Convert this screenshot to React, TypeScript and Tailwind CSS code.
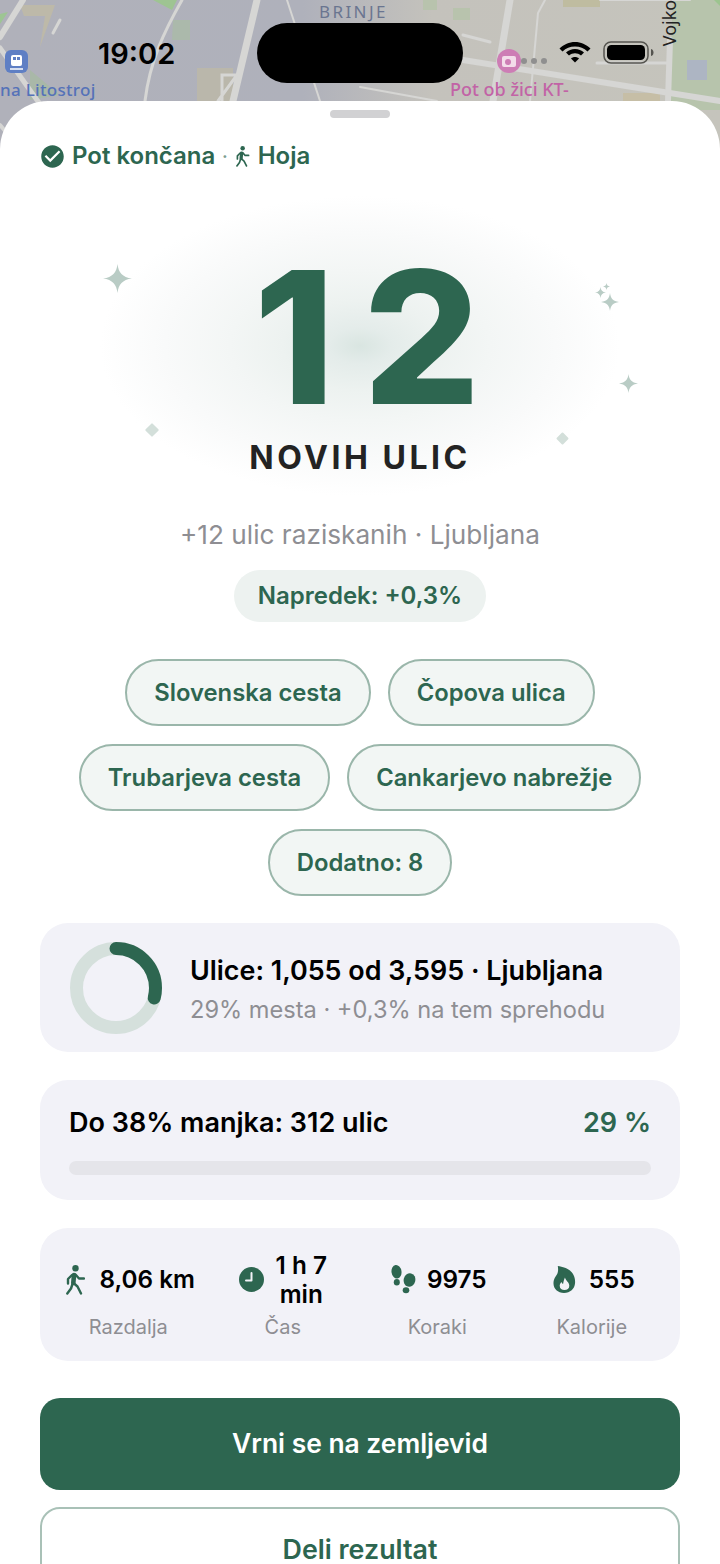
import { MdCheckCircle } from "react-icons/md";

const G = "#2d6650";

function MapBackdrop() {
  return (
    <svg className="absolute left-0 top-0" width="720" height="170" viewBox="0 0 720 170">
      <defs>
        <linearGradient id="mapbg" x1="0" x2="1" y1="0" y2="0">
          <stop offset="0" stopColor="#b0b1ba" />
          <stop offset="0.42" stopColor="#afb1bb" />
          <stop offset="0.6" stopColor="#c4c2bc" />
          <stop offset="1" stopColor="#c5c4bc" />
        </linearGradient>
        <filter id="soft">
          <feGaussianBlur stdDeviation="0.7" />
        </filter>
      </defs>
      <rect width="720" height="170" fill="url(#mapbg)" />
      <g filter="url(#soft)">
        <path d="M20 5 H55 L40 47 L45 16 H24 Z" fill="#bdb9a9" />
        <path d="M153 0 H177 L172 10 Z" fill="#9ec492" />
        <path d="M173 20 H190 V40 H172 Z" fill="#abb9ab" />
        <path d="M197 68 H233 V101 H197 Z" fill="#bab7ab" />
        <path d="M0 14 L8 12 L0 24 Z" fill="#9dc593" />
        <path d="M30 70 L60 95 L30 100 Z" fill="#a9b8a8" />
        <path d="M673 0 H720 V110 H668 Z" fill="#b7c4ac" />
        <path d="M714 0 H720 V6 Z" fill="#9cc48f" />
        <path d="M687 60 H707 V80 H687 Z" fill="#adb5c3" />
        <path d="M563 0 H600 V7 H563 Z" fill="#bfbca0" />
        <path d="M453 8 H470 V20 H453 Z" fill="#b8c3ad" />
        <path d="M423 0 H437 V10 H423 Z" fill="#b8c3ad" />
        <path d="M623 93 H660 V101 H623 Z" fill="#c6bea6" />
        <g fill="none" stroke="#d6d6d4" strokeLinecap="round">
          <path d="M23 0 L0 37" strokeWidth="6" />
          <path d="M0 48 L37 100 L52 120" strokeWidth="5" />
          <path d="M0 125 L30 160" strokeWidth="4" />
          <path d="M182 0 C165 30 150 60 145 101" strokeWidth="3" />
          <path d="M257 0 L233 101" strokeWidth="7" />
          <path d="M287 0 L320 101" strokeWidth="2" />
          <path d="M60 20 L53 33" strokeWidth="3" />
          <path d="M222 101 V75 H237 L218 101" strokeWidth="3" />
          <path d="M510 0 L493 101" strokeWidth="7" />
          <path d="M545 0 L538 13 L530 101" strokeWidth="2" />
          <path d="M463 60 L720 101" strokeWidth="6" />
          <path d="M670 40 L668 101" strokeWidth="6" />
          <path d="M597 63 H667" strokeWidth="3" />
          <path d="M463 35 L490 42" strokeWidth="3" />
          <path d="M360 87 L437 101" strokeWidth="2" />
          <path d="M600 0 H690" strokeWidth="2" />
        </g>
      </g>
      <rect x="5" y="50" width="23" height="23" rx="6" fill="#5f7fc4" />
      <rect x="11" y="55" width="11" height="11" rx="2" fill="#ffffff" />
      <rect x="13" y="57" width="3" height="3" fill="#5f7fc4" />
      <rect x="17" y="57" width="3" height="3" fill="#5f7fc4" />
      <path d="M10 69 H23" stroke="#fff" strokeWidth="1.500" />
      <circle cx="509" cy="61" r="12" fill="#cd7db5" />
      <rect x="502" y="56" width="14" height="11" rx="2" fill="#f3dcea" />
      <circle cx="508" cy="62" r="3" fill="#cd7db5" />
      <circle cx="524" cy="61" r="3" fill="#8f8f8f" />
      <circle cx="534" cy="61" r="3" fill="#8f8f8f" />
      <circle cx="544" cy="61" r="3" fill="#8f8f8f" />
    </svg>
  );
}

function StatusBar() {
  return (
    <>
      <span className="absolute left-[0px] top-[79px] text-[17px] leading-[22px] font-medium tracking-[0.3px] text-[#5572b8] font-['Noto_Sans',sans-serif]">na Litostroj</span>
      <span className="absolute left-[319px] top-[1px] text-[17px] leading-[22px] tracking-[2.400px] text-[#6a7590] font-['Noto_Sans',sans-serif]">BRINJE</span>
      <span className="absolute left-[450px] top-[78px] text-[18px] leading-[22px] font-medium text-[#c263a6] font-['Noto_Sans',sans-serif]">Pot ob žici KT-</span>
      <span className="absolute left-[646px] top-[12px] -rotate-90 text-[18px] leading-[22px] text-[#222] font-['Noto_Sans',sans-serif]">Vojko</span>
      <span className="absolute left-[98px] top-[36px] text-[29px] leading-[35px] font-semibold text-black">19:02</span>
      <div className="absolute left-[257px] top-[23px] h-[60px] w-[206px] rounded-[30px] bg-black" />
      <svg className="absolute left-[559px] top-[41px]" width="32" height="23" viewBox="0 0 32 23">
        <path d="M16 5 C10 5 5 7.500 0.500 11.500 L3.500 14.500 C7 11 11 9.500 16 9.500 C21 9.500 25 11 28.500 14.500 L31.500 11.500 C27 7.500 22 5 16 5 Z" transform="translate(0 -4)" fill="#000" />
        <path d="M16 11 C12.500 11 9.500 12.300 7 14.500 L10 17.500 C11.800 16 13.800 15.300 16 15.300 C18.200 15.300 20.200 16 22 17.500 L25 14.500 C22.500 12.300 19.500 11 16 11 Z" transform="translate(0 -3)" fill="#000" />
        <path d="M16 17 C14.500 17 13 17.500 12 18.500 L16 22.500 L20 18.500 C19 17.500 17.500 17 16 17 Z" transform="translate(0 -1)" fill="#000" />
      </svg>
      <svg className="absolute left-[603px] top-[40px]" width="52" height="24" viewBox="0 0 52 24">
        <rect x="1" y="2" width="44" height="21" rx="7" fill="none" stroke="#55544f" strokeWidth="1.500" />
        <rect x="4" y="5" width="38" height="15" rx="4.500" fill="#000" />
        <path d="M48 9 C50 9.500 50.500 11 50.500 12.500 C50.500 14 50 15.500 48 16 Z" fill="#55544f" />
      </svg>
    </>
  );
}

function Star({ size, className, color = "#b9ccc5" }: { size: number; className: string; color?: string }) {
  return (
    <svg className={className} width={size} height={size} viewBox="0 0 24 24">
      <path d="M12 0 C12.800 7 16 11 24 12 C16 13 12.800 17 12 24 C11.200 17 8 13 0 12 C8 11 11.200 7 12 0 Z" fill={color} />
    </svg>
  );
}

function Walk({ h }: { h: number }) {
  return (
    <svg width={(h * 19) / 30} height={h} viewBox="0 0 19 30" fill="none" stroke={G} strokeWidth="2.400" strokeLinecap="round" strokeLinejoin="round">
      <circle cx="9.500" cy="3.300" r="3.200" fill={G} stroke="none" />
      <path d="M8 10 L7.300 18" strokeWidth="4.600" />
      <path d="M9.500 9.500 L13 13.500 L18 13.500" />
      <path d="M6 10 L2 14 L2 18.500" />
      <path d="M7.500 18 L11.500 21.500 L15 28.500" />
      <path d="M6.500 19 L5 23.500 L1.300 28.500" />
    </svg>
  );
}

function Chip({ children }: { children: string }) {
  return (
    <span className="flex h-[67px] items-center rounded-[34px] border-2 border-[#9ab6aa] bg-[#f2f6f4] px-[27px] text-[23.800px] font-semibold text-[#2d6650]">
      {children}
    </span>
  );
}

function Footsteps() {
  return (
    <svg width="25" height="29" viewBox="0 0 25 29" fill={G}>
      <ellipse cx="5.500" cy="6.800" rx="5" ry="6.800" transform="rotate(-8 5.500 6.800)" />
      <ellipse cx="5.800" cy="17.200" rx="3" ry="3.300" />
      <ellipse cx="18.500" cy="15" rx="5.800" ry="6.800" transform="rotate(14 18.500 15)" />
      <ellipse cx="15" cy="25.300" rx="3.300" ry="3" />
    </svg>
  );
}

function Flame() {
  return (
    <svg width="23" height="27" viewBox="0 0 24 28">
      <path d="M5 0 C13 1 24 5 23 18 C22.500 24 18 28 11.500 28 C5 28 0.500 24 0.500 18 C0.500 13 3 11 4.500 8 C5.500 5.500 5.500 3 5 0 Z" fill={G} />
      <path d="M12.500 12 C13 15 17 17 17 20.500 C17 23.500 14.800 25 12 25 C9.200 25 7 23.500 7 20.500 C7 19 7.800 17.500 9 16.500 C9.300 18 10 18.500 10.600 18.500 C11 16 11.500 14 12.500 12 Z" fill="#f2f2f7" />
    </svg>
  );
}

function Clock() {
  return (
    <svg width="25" height="25" viewBox="0 0 25 25">
      <circle cx="12.500" cy="12.500" r="12.500" fill={G} />
      <path d="M12.500 6 V13.500 H7" fill="none" stroke="#f2f2f7" strokeWidth="2" strokeLinecap="round" strokeLinejoin="round" />
    </svg>
  );
}

function Stat({ icon, value, label, row }: { icon: React.ReactNode; value: React.ReactNode; label: string; row: string }) {
  return (
    <div className="flex flex-col items-center">
      <div className={`flex h-[58px] items-center ${row}`}>
        {icon}
        <span className="text-center text-[24.300px] leading-[29px] font-semibold text-black">{value}</span>
      </div>
      <span className="mt-[6px] text-[20px] leading-[24px] text-[#8e8e93]">{label}</span>
    </div>
  );
}

export default function App() {
  return (
    <div className="relative h-[1564px] w-[720px] overflow-hidden bg-white font-['Inter',sans-serif]">
      <MapBackdrop />
      <StatusBar />
      <div className="relative mt-[101px] flex flex-col rounded-t-[48px] bg-white px-[40px]">
        <div className="mx-auto mt-[9px] h-[8px] w-[60px] rounded-full bg-[#d1d1d3]" />
        <div className="mt-[23px] flex h-[30px] items-center text-[24px] font-semibold text-[#2d6650]">
          <MdCheckCircle size={27} className="ml-[-1px] mr-[6px]" color={G} />
          <span>Pot končana</span>
          <span className="ml-[5px] w-[9px] text-center text-[18px] text-[#7f9f92]">·</span>
          <span className="ml-[7px] mr-[8px] flex"><Walk h={21} /></span>
          <span>Hoja</span>
        </div>

        <div className="relative mx-[-40px] mt-[74px] flex flex-col items-center">
          <div className="absolute left-[100px] top-[-49px] h-[300px] w-[520px] bg-[radial-gradient(ellipse_closest-side,#d9e5e1_0%,#e4ecea_12%,#edf2f0_30%,#f3f6f5_50%,#f9fafa_75%,#ffffff_100%)]" />
          <Star size={29} className="absolute left-[103px] top-[19px]" />
          <Star size={18} className="absolute left-[601px] top-[48px]" />
          <Star size={11} className="absolute left-[595px] top-[42px]" />
          <Star size={7} className="absolute left-[603px] top-[38px]" />
          <Star size={19} className="absolute left-[619px] top-[129px]" />
          <div className="absolute left-[147px] top-[180px] h-[10px] w-[10px] rotate-45 rounded-[1px] bg-[#d3dfda]" />
          <div className="absolute left-[558px] top-[189px] h-[9px] w-[9px] rotate-45 rounded-[1px] bg-[#d3dfda]" />
          <div className="relative pl-[42px] text-[184px] leading-[184px] font-extrabold tracking-[28px] text-[#2d6650]">12</div>
          <div className="relative mt-[9px] text-[32px] leading-[40px] font-bold tracking-[3.500px] text-[#232323]">NOVIH ULIC</div>
        </div>

        <div className="mt-[40px] text-center text-[26.200px] leading-[34px] text-[#8e8e93]">+12 ulic raziskanih · Ljubljana</div>
        <div className="mt-[18px] flex justify-center">
          <span className="flex h-[52px] items-center rounded-[26px] bg-[#edf2f0] px-[24px] text-[24px] font-semibold text-[#2d6650]">Napredek: +0,3%</span>
        </div>

        <div className="mt-[37px] flex flex-wrap justify-center gap-x-[17px] gap-y-[18px]">
          <Chip>Slovenska cesta</Chip>
          <Chip>Čopova ulica</Chip>
          <Chip>Trubarjeva cesta</Chip>
          <Chip>Cankarjevo nabrežje</Chip>
          <Chip>Dodatno: 8</Chip>
        </div>

        <div className="mt-[27px] flex h-[129px] items-center gap-[28px] rounded-[28px] bg-[#f2f2f8] pl-[30px]">
          <svg width="92" height="92" viewBox="0 0 92 92">
            <circle cx="46" cy="46" r="39.500" fill="none" stroke="#d5e0dc" strokeWidth="13" />
            <circle cx="46" cy="46" r="39.500" fill="none" stroke={G} strokeWidth="13" strokeLinecap="round" strokeDasharray="72 248.200" transform="rotate(-90 46 46)" />
          </svg>
          <div className="flex flex-col pt-[2px]">
            <span className="text-[26.900px] leading-[32px] font-semibold text-black">Ulice: 1,055 od 3,595 · Ljubljana</span>
            <span className="mt-[9px] text-[23.600px] leading-[29px] text-[#8e8e93]">29% mesta · +0,3% na tem sprehodu</span>
          </div>
        </div>

        <div className="mt-[28px] flex h-[120px] flex-col rounded-[28px] bg-[#f2f2f8] px-[29px] pt-[27px]">
          <div className="flex items-center justify-between text-[27px] leading-[32px] font-semibold">
            <span className="text-black">Do 38% manjka: 312 ulic</span>
            <span className="text-[#2d6650]">29 %</span>
          </div>
          <div className="mt-[22px] h-[14px] rounded-full bg-[#e5e5ea]" />
        </div>

        <div className="mt-[28px] grid h-[133px] grid-cols-4 items-center rounded-[28px] bg-[#f2f2f8] px-[11px]">
          <Stat row="gap-[14px] pl-[5px]" icon={<Walk h={30} />} value="8,06 km" label="Razdalja" />
          <Stat row="gap-[12px]" icon={<Clock />} value={<>1 h 7<br />min</>} label="Čas" />
          <Stat row="gap-[11px] pl-[3px]" icon={<Footsteps />} value="9975" label="Koraki" />
          <Stat row="gap-[13px] pl-[4px]" icon={<Flame />} value="555" label="Kalorije" />
        </div>

        <div className="mt-[37px] flex h-[92px] shrink-0 items-center justify-center rounded-[20px] bg-[#2d6650] text-[26.400px] font-semibold text-white">Vrni se na zemljevid</div>
        <div className="mt-[17px] flex h-[84px] shrink-0 items-center justify-center rounded-[20px] border-2 border-[#a9c1b7] bg-white text-[26.800px] font-semibold text-[#2d6650]">Deli rezultat</div>
      </div>
    </div>
  );
}
